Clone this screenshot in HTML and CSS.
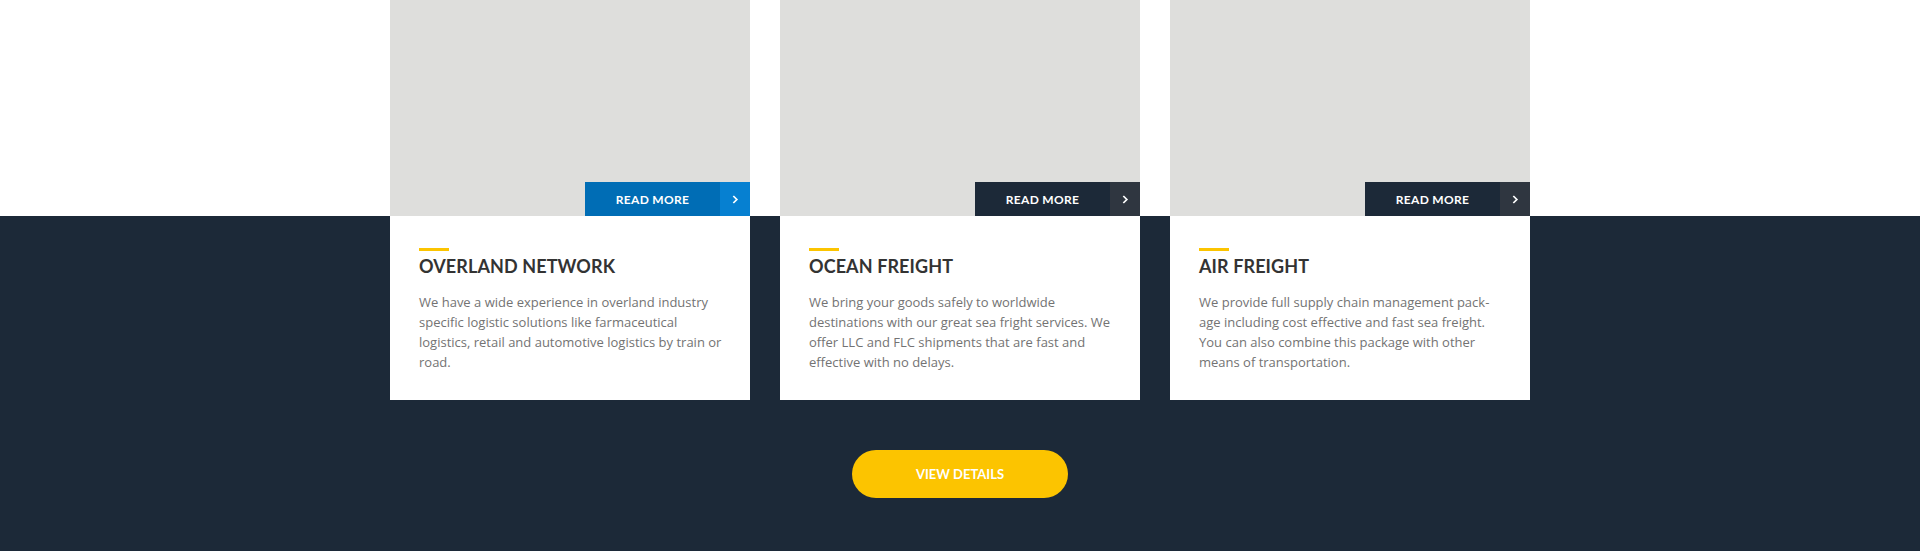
FILE: index.html
```html
<!DOCTYPE html>
<html lang="en">
<head>
<meta charset="utf-8">
<title>Services</title>
<link rel="stylesheet" href="styles.css">
</head>
<body>
<section class="services">
  <div class="cards">
    <article class="card">
      <div class="card-media">
        <a class="read-more read-more--active" href="#"><span class="rm-label">READ MORE</span><span class="rm-arrow"><svg viewBox="0 0 8 10" width="7" height="9"><path d="M1.5 1 L5.5 5 L1.5 9" fill="none" stroke="#fff" stroke-width="2"/></svg></span></a>
      </div>
      <div class="card-body">
        <span class="accent"></span>
        <h3 class="card-title">OVERLAND NETWORK</h3>
        <p class="card-text">We have a wide experience in overland industry specific logistic solutions like farmaceutical logistics, retail and automotive logistics by train or road.</p>
      </div>
    </article>
    <article class="card">
      <div class="card-media">
        <a class="read-more" href="#"><span class="rm-label">READ MORE</span><span class="rm-arrow"><svg viewBox="0 0 8 10" width="7" height="9"><path d="M1.5 1 L5.5 5 L1.5 9" fill="none" stroke="#fff" stroke-width="2"/></svg></span></a>
      </div>
      <div class="card-body">
        <span class="accent"></span>
        <h3 class="card-title">OCEAN FREIGHT</h3>
        <p class="card-text">We bring your goods safely to worldwide destinations with our great sea fright services. We offer LLC and FLC shipments that are fast and effective with no delays.</p>
      </div>
    </article>
    <article class="card">
      <div class="card-media">
        <a class="read-more" href="#"><span class="rm-label">READ MORE</span><span class="rm-arrow"><svg viewBox="0 0 8 10" width="7" height="9"><path d="M1.5 1 L5.5 5 L1.5 9" fill="none" stroke="#fff" stroke-width="2"/></svg></span></a>
      </div>
      <div class="card-body">
        <span class="accent"></span>
        <h3 class="card-title">AIR FREIGHT</h3>
        <p class="card-text">We provide full supply chain management pack-age including cost effective and fast sea freight. You can also combine this package with other means of transportation.</p>
      </div>
    </article>
  </div>
  <div class="actions">
    <a class="view-details" href="#">VIEW DETAILS</a>
  </div>
</section>
</body>
</html>
```
FILE: styles.css
```css
html, body {
  margin: 0;
  padding: 0;
}
body {
  width: 1920px;
  height: 551px;
  overflow: hidden;
  background: #1c2938;
}
.services {
  height: 551px;
  background: linear-gradient(#ffffff 0, #ffffff 216px, #1c2938 216px, #1c2938 100%);
  display: flex;
  flex-direction: column;
  align-items: center;
}
.cards {
  display: grid;
  grid-template-columns: repeat(3, 360px);
  column-gap: 30px;
  width: 1140px;
  transform: translateX(0);
}
.card {
  display: flex;
  flex-direction: column;
}
.card-media {
  position: relative;
  height: 216px;
  background: #dededc;
}
.read-more {
  position: absolute;
  right: 0;
  bottom: 0;
  display: flex;
  height: 34px;
  text-decoration: none;
  color: #fff;
}
.rm-label {
  width: 135px;
  display: flex;
  align-items: center;
  justify-content: center;
  background: #1c2938;
  font-family: "Lato", sans-serif;
  font-weight: 700;
  font-size: 12px;
  letter-spacing: 0.3px;
}
.rm-arrow {
  width: 30px;
  display: flex;
  align-items: center;
  justify-content: center;
  background: #2f3640;
}
.read-more--active .rm-label { background: #006db5; }
.read-more--active .rm-arrow { background: #0680d1; }
.card-body {
  background: #fff;
  height: 184px;
  box-sizing: border-box;
  padding: 32px 22px 0 29px;
}
.accent {
  display: block;
  width: 30px;
  height: 3px;
  background: #fcc400;
}
.card-title {
  margin: 4px 0 0 0;
  font-family: "Lato", sans-serif;
  font-weight: 700;
  font-size: 18px;
  line-height: 22px;
  color: #333333;
  letter-spacing: 0.1px;
}
.card-text {
  margin: 15px 0 0 0;
  font-family: "Open Sans", sans-serif;
  font-size: 13px;
  line-height: 20px;
  color: #737373;
}
.actions {
  margin-top: 50px;
  display: flex;
  justify-content: center;
}
.view-details {
  width: 216px;
  height: 48px;
  border-radius: 24px;
  background: #fcc400;
  color: #fff;
  text-decoration: none;
  display: flex;
  align-items: center;
  justify-content: center;
  font-family: "Lato", sans-serif;
  font-weight: 700;
  font-size: 13px;
}
```
